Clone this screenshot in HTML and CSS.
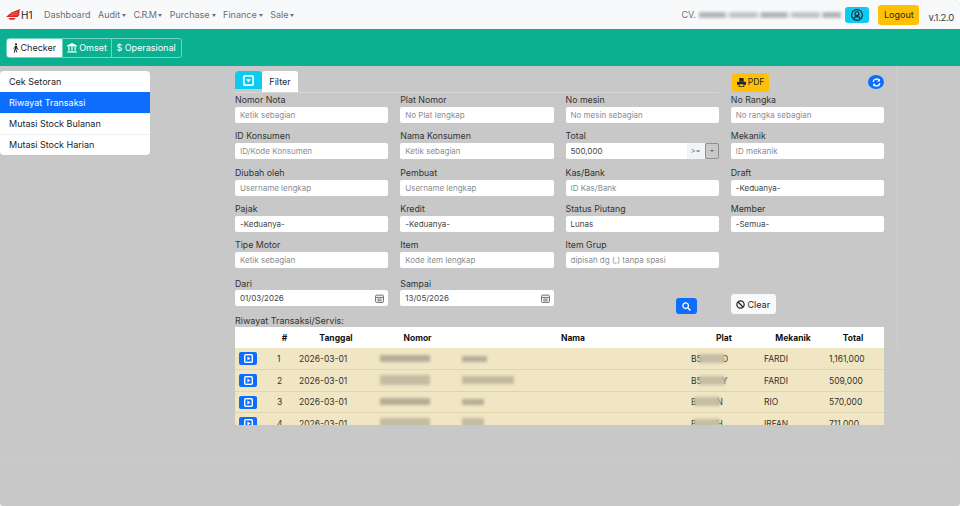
FILE: index.html
```html
<!DOCTYPE html>
<html lang="id">
<head>
<meta charset="utf-8">
<title>H1</title>
<link rel="stylesheet" href="styles.css">
</head>
<body>
<nav class="navbar">
  <a class="brand">
    <svg class="wing" viewBox="0 0 16 12"><path d="M0 8.500 6 3.500 15.500 0 14 3 15.500 3 13.500 5.500 15 5.500 12.500 8.800H1Z" fill="#e2231a"/><path d="M5.500 5 13 3.400M4 6.900 12.500 6" stroke="#f8f9fa" stroke-width=".35"/><path d="M2.500 9.800H10.500L8.500 11.700H4Z" fill="#e2231a"/></svg>
    <span>H1</span>
  </a>
  <ul class="menu">
    <li>Dashboard</li>
    <li class="caret">Audit</li>
    <li class="caret crm">C.R.M</li>
    <li class="caret">Purchase</li>
    <li class="caret">Finance</li>
    <li class="caret">Sale</li>
  </ul>
  <div class="nav-right">
    <span class="company">CV. <i class="blur blur-company"></i></span>
    <button class="btn btn-cyan btn-user" aria-label="Akun">
      <svg viewBox="0 0 16 16" width="12" height="12" fill="none" stroke="#212529" stroke-width="1.500"><circle cx="8" cy="8" r="7.200"/><circle cx="8" cy="6.300" r="2.600"/><path d="M3.400 13c1-2 2.800-2.800 4.600-2.800s3.600.8 4.600 2.800"/></svg>
    </button>
    <button class="btn btn-yellow btn-logout">Logout</button>
    <span class="version">v.1.2.0</span>
  </div>
</nav>

<header class="subbar">
  <div class="seg">
    <button class="seg-btn seg-active">
      <svg viewBox="0 0 10 16" width="6" height="10" fill="#212529"><circle cx="5" cy="2" r="1.800"/><path d="M3.500 4.500h3l1 4 2 1.500-.6 1-2.400-1.500-.5-1.500-.5 2.500 2 5H6l-1.800-4.500L2.800 16H1.200l2-7.500V6L2 7.500V10H1V7Z"/></svg>
      Checker
    </button>
    <button class="seg-btn">
      <svg viewBox="0 0 16 16" width="10" height="10" fill="#fff"><path d="M8 0 16 4V5.500H0V4ZM2 6.500H4V12H2ZM7 6.500H9V12H7ZM12 6.500H14V12H12ZM1 13H15V14.500H1ZM0 15H16V16H0Z"/></svg>
      Omset
    </button>
    <button class="seg-btn">$ Operasional</button>
  </div>
</header>

<main class="layout">
  <aside class="side">
    <a class="side-item">Cek Setoran</a>
    <a class="side-item side-active">Riwayat Transaksi</a>
    <a class="side-item">Mutasi Stock Bulanan</a>
    <a class="side-item">Mutasi Stock Harian</a>
  </aside>

  <section class="content">
    <div class="tools">
      <div class="tabs">
        <button class="tab-toggle" aria-label="Tutup filter">
          <svg viewBox="0 0 16 16" width="11" height="11"><rect width="16" height="16" rx="3" fill="#fff"/><rect x="2.500" y="2.500" width="11" height="11" fill="#0dcaf0"/><path d="M4.500 6h7L8 10.500Z" fill="#fff"/></svg>
        </button>
        <span class="tab">Filter</span>
      </div>
      <div class="tool-right">
        <button class="btn btn-yellow btn-pdf">
          <svg viewBox="0 0 16 16" width="9" height="9" fill="#212529"><path d="M4 0h6.500L12 1.500V6H4ZM1.500 6.500h13A1.500 1.500 0 0 1 16 8v4h-3v4H3v-4H0V8a1.500 1.500 0 0 1 1.500-1.500ZM4.500 11v3.500h7V11Z"/></svg>
          PDF
        </button>
        <button class="refresh" aria-label="Muat ulang">
          <svg viewBox="0 0 16 16" width="9" height="9" fill="none" stroke="#fff" stroke-width="2.400"><path d="M2 7A6 6 0 0 1 13 4.500"/><path d="M14 9A6 6 0 0 1 3 11.500"/><path d="M14 1v5H9Z" fill="#fff" stroke="none"/><path d="M2 15v-5h5Z" fill="#fff" stroke="none"/></svg>
        </button>
      </div>
    </div>

    <form class="filters">
      <label class="field">Nomor Nota<span class="input ph">Ketik sebagian</span></label>
      <label class="field">Plat Nomor<span class="input ph">No Plat lengkap</span></label>
      <label class="field">No mesin<span class="input ph">No mesin sebagian</span></label>
      <label class="field">No Rangka<span class="input ph">No rangka sebagian</span></label>

      <label class="field">ID Konsumen<span class="input ph">ID/Kode Konsumen</span></label>
      <label class="field">Nama Konsumen<span class="input ph">Ketik sebagian</span></label>
      <label class="field">Total
        <span class="group"><span class="input grow">500,000</span><span class="addon">&gt;=</span><span class="drop"></span></span>
      </label>
      <label class="field">Mekanik<span class="input ph">ID mekanik</span></label>

      <label class="field">Diubah oleh<span class="input ph">Username lengkap</span></label>
      <label class="field">Pembuat<span class="input ph">Username lengkap</span></label>
      <label class="field">Kas/Bank<span class="input ph">ID Kas/Bank</span></label>
      <label class="field">Draft<span class="input">-Keduanya-</span></label>

      <label class="field">Pajak<span class="input">-Keduanya-</span></label>
      <label class="field">Kredit<span class="input">-Keduanya-</span></label>
      <label class="field">Status Piutang<span class="input">Lunas</span></label>
      <label class="field">Member<span class="input">-Semua-</span></label>

      <label class="field">Tipe Motor<span class="input ph">Ketik sebagian</span></label>
      <label class="field">Item<span class="input ph">Kode item lengkap</span></label>
      <label class="field">Item Grup<span class="input ph">dipisah dg (,) tanpa spasi</span></label>
      <span></span>

      <label class="field field-date">Dari<span class="input date">01/03/2026<svg class="cal" viewBox="0 0 16 16" width="9" height="9" fill="none" stroke="#555" stroke-width="1.500"><rect x="1" y="2" width="14" height="13" rx="2"/><path d="M1 6h14M4 9h8M4 12h8"/></svg></span></label>
      <label class="field field-date">Sampai<span class="input date">13/05/2026<svg class="cal" viewBox="0 0 16 16" width="9" height="9" fill="none" stroke="#555" stroke-width="1.500"><rect x="1" y="2" width="14" height="13" rx="2"/><path d="M1 6h14M4 9h8M4 12h8"/></svg></span></label>
      <div class="search-cell">
        <button type="button" class="btn-search" aria-label="Cari">
          <svg viewBox="0 0 16 16" width="9" height="9" fill="none" stroke="#fff" stroke-width="2.400"><circle cx="6.500" cy="6.500" r="5"/><path d="M10.500 10.500 15 15"/></svg>
        </button>
      </div>
      <div class="clear-cell">
        <button type="button" class="btn-clear">
          <svg viewBox="0 0 16 16" width="9" height="9" fill="none" stroke="#212529" stroke-width="2.200"><circle cx="8" cy="8" r="6.500"/><path d="M3.500 3.500 12.500 12.500"/></svg>
          Clear
        </button>
      </div>
    </form>

    <p class="caption">Riwayat Transaksi/Servis:</p>
    <div class="table-wrap">
      <table class="trx">
        <colgroup>
          <col class="c0"><col class="c1"><col class="c2"><col class="c3"><col class="c4"><col class="c5"><col class="c6"><col class="c7">
        </colgroup>
        <thead>
          <tr><th></th><th>#</th><th>Tanggal</th><th>Nomor</th><th>Nama</th><th>Plat</th><th>Mekanik</th><th>Total</th></tr>
        </thead>
        <tbody>
          <tr>
            <td class="play-cell"><button class="play" aria-label="Buka"><svg viewBox="0 0 16 16" width="9" height="9"><rect width="16" height="16" rx="3" fill="#fff"/><rect x="2.500" y="2.500" width="11" height="11" fill="#0d6efd"/><path d="M6 4.500 11.500 8 6 11.500Z" fill="#fff"/></svg></button></td>
            <td>1</td><td>2026-03-01</td>
            <td><i class="blur b-no"></i></td><td><i class="blur b-n1"></i></td>
            <td class="plat">B5<i class="blur b-pl"></i>O</td><td>FARDI</td><td>1,161,000</td>
          </tr>
          <tr>
            <td class="play-cell"><button class="play" aria-label="Buka"><svg viewBox="0 0 16 16" width="9" height="9"><rect width="16" height="16" rx="3" fill="#fff"/><rect x="2.500" y="2.500" width="11" height="11" fill="#0d6efd"/><path d="M6 4.500 11.500 8 6 11.500Z" fill="#fff"/></svg></button></td>
            <td>2</td><td>2026-03-01</td>
            <td><i class="blur b-no b-tall"></i></td><td><i class="blur b-n2"></i></td>
            <td class="plat">B5<i class="blur b-pl"></i>Y</td><td>FARDI</td><td>509,000</td>
          </tr>
          <tr>
            <td class="play-cell"><button class="play" aria-label="Buka"><svg viewBox="0 0 16 16" width="9" height="9"><rect width="16" height="16" rx="3" fill="#fff"/><rect x="2.500" y="2.500" width="11" height="11" fill="#0d6efd"/><path d="M6 4.500 11.500 8 6 11.500Z" fill="#fff"/></svg></button></td>
            <td>3</td><td>2026-03-01</td>
            <td><i class="blur b-no"></i></td><td><i class="blur b-n3"></i></td>
            <td class="plat">B<i class="blur b-pl"></i>N</td><td>RIO</td><td>570,000</td>
          </tr>
          <tr>
            <td class="play-cell"><button class="play" aria-label="Buka"><svg viewBox="0 0 16 16" width="9" height="9"><rect width="16" height="16" rx="3" fill="#fff"/><rect x="2.500" y="2.500" width="11" height="11" fill="#0d6efd"/><path d="M6 4.500 11.500 8 6 11.500Z" fill="#fff"/></svg></button></td>
            <td>4</td><td>2026-03-01</td>
            <td><i class="blur b-no b-tall"></i></td><td><i class="blur b-n3 b-tall"></i></td>
            <td class="plat">B<i class="blur b-pl"></i>H</td><td>IRFAN</td><td>711,000</td>
          </tr>
        </tbody>
      </table>
    </div>
  </section>
</main>
</body>
</html>
```

FILE: styles.css
```css
* { box-sizing: border-box; }
html { height: 100%; background: #fff; }
body {
  position: relative;
  height: 100%;
  margin: 0;
  background: #c8c8c8;
  color: #212529;
  font-family: "Inter", "Open Sans", "Liberation Sans", sans-serif;
  font-size: 9px;
  overflow: hidden;
  border-radius: 0 6px 3px 3px;
}
/* faint edges of the dimmed panel behind the page */
body::before {
  content: "";
  position: absolute;
  left: 896px;
  top: 66px;
  width: 2px;
  height: 282px;
  background: #cccccc;
}
body::after {
  content: "";
  position: absolute;
  left: 0;
  top: 459px;
  width: 953px;
  height: 1px;
  background: #cccccc;
}
button { font: inherit; color: inherit; border: 0; padding: 0; cursor: pointer; }
i { font-style: normal; }

.navbar {
  height: 29px;
  background: #f8f9fa;
  display: flex;
  align-items: center;
  padding: 0 6px;
}
.brand { display: flex; align-items: center; width: 38px; font-size: 10px; color: #222; }
.wing { width: 15px; height: 11px; }
.menu { display: flex; gap: 7.500px; list-style: none; margin: 0; padding: 0; color: #6c6f73; font-size: 9px; }
.caret::after {
  content: "";
  display: inline-block;
  margin-left: 2px;
  vertical-align: 1.500px;
  border-top: 3px solid currentColor;
  border-left: 2.500px solid transparent;
  border-right: 2.500px solid transparent;
}
.crm { letter-spacing: -.6px; }
.nav-right { margin-left: auto; display: flex; align-items: center; }
.company { display: flex; align-items: center; gap: 3px; color: #6c6f73; width: 164px; }
.blur { display: inline-block; filter: blur(1.500px); }
.blur-company {
  width: 142px;
  height: 6px;
  background: repeating-linear-gradient(90deg, #b3b6b8 0 26px, #dfe1e3 26px 31px, #c2c5c7 31px 58px, #e3e5e6 58px 62px);
}
.btn { border-radius: 3px; }
.btn-cyan { background: #0dcaf0; }
.btn-yellow { background: #ffc107; }
.btn-user { width: 24px; height: 16px; display: flex; align-items: center; justify-content: center; margin-right: 9px; }
.btn-logout { width: 41px; height: 20px; font-size: 9px; margin-right: 9px; }
.version { font-size: 9.500px; letter-spacing: -.3px; color: #3a3d40; margin-top: 6px; }

.subbar {
  height: 37px;
  background: #0bb091;
  display: flex;
  align-items: center;
  padding: 0 6px;
}
.seg { display: flex; height: 20px; border: 1px solid #6fd3c0; border-radius: 3px; }
.seg-btn {
  display: flex;
  align-items: center;
  gap: 2px;
  background: transparent;
  color: #fff;
  padding: 0 4.500px;
  border-left: 1px solid #6fd3c0;
  font-size: 9px;
}
.seg-btn:first-child { border-left: 0; padding: 0 5.500px; }
.seg-btn:last-child { padding: 0 5px 0 4px; }
.seg-active { background: #fff; color: #212529; border-radius: 2px 0 0 2px; }

.layout { display: flex; padding-top: 5px; }
.side {
  width: 150px;
  height: 84px;
  background: #fff;
  border-radius: 4px;
  overflow: hidden;
  flex: none;
}
.side-item { display: flex; align-items: center; height: 21px; padding-left: 9px; box-shadow: inset 0 1px 0 #eef0f2; }
.side-item:first-child { box-shadow: none; }
.side-active { background: #0d6efd; color: #fff; box-shadow: none; }

.content { width: 649px; margin-left: 85px; }
.tools { display: grid; grid-template-columns: 1fr 153px; column-gap: 12px; height: 22px; }
.tabs { display: flex; align-items: flex-end; border-bottom: 1px solid #d6d6d6; }
.tab-toggle {
  width: 27px;
  height: 18px;
  margin-bottom: 3px;
  background: #0dcaf0;
  border-radius: 4px 4px 0 0;
  display: flex;
  align-items: center;
  justify-content: center;
}
.tab {
  width: 36px;
  height: 21px;
  background: #fff;
  border-radius: 3px 3px 0 0;
  display: flex;
  align-items: center;
  justify-content: center;
}
.tool-right { display: flex; justify-content: space-between; align-items: center; }
.btn-pdf { width: 37px; height: 19px; display: flex; align-items: center; justify-content: center; gap: 2px; font-size: 8.500px; margin-left: 1px; }
.refresh { width: 16px; height: 14px; border-radius: 50%; background: #0d6efd; display: flex; align-items: center; justify-content: center; }

.filters {
  display: grid;
  grid-template-columns: repeat(4, 1fr);
  column-gap: 12px;
  grid-template-rows: repeat(5, 36.250px) 40px;
  padding-top: 1px;
}
.field { display: flex; flex-direction: column; color: #333; line-height: 12px; font-size: 8.800px; }
.input {
  display: flex;
  align-items: center;
  height: 16px;
  margin-top: 1px;
  background: #fff;
  border-radius: 2px;
  padding-left: 5px;
  font-size: 8px;
  color: #444;
}
.ph { color: #8a8d90; }
.group { display: flex; margin-top: 1px; height: 16px; }
.group .input { margin-top: 0; }
.grow { flex: 1; border-radius: 2px 0 0 2px; }
.addon {
  width: 18px;
  background: #f1f3f4;
  display: flex;
  align-items: center;
  justify-content: center;
  font-size: 7px;
  color: #555;
}
.drop {
  width: 14px;
  background: #c9c9c9;
  border: 1px solid #8f8f8f;
  border-radius: 2px;
  display: flex;
  align-items: center;
  justify-content: center;
}
.drop::after { content: ""; border-top: 2px solid #666; border-left: 2px solid transparent; border-right: 2px solid transparent; }
.field-date { padding-top: 3px; }
.field-date .input { margin-top: 0; }
.date { justify-content: space-between; padding-right: 4px; }
.search-cell { display: flex; justify-content: flex-end; align-items: flex-end; padding: 0 22px 1px 0; }
.clear-cell { display: flex; align-items: flex-end; padding-bottom: 1px; }
.btn-search { width: 21px; height: 16px; background: #0d6efd; border-radius: 3px; display: flex; align-items: center; justify-content: center; }
.btn-clear { width: 45px; height: 20px; background: #f8f9fa; border-radius: 3px; display: flex; align-items: center; justify-content: center; gap: 2px; }

.caption { margin: 0; height: 12px; line-height: 11px; color: #333; }
.table-wrap { height: 98px; overflow: hidden; }
.trx { width: 649px; table-layout: fixed; border-collapse: collapse; font-size: 8.500px; }
.c0 { width: 42px; } .c1 { width: 22px; } .c2 { width: 81px; } .c3 { width: 82px; }
.c4 { width: 229px; } .c5 { width: 73px; } .c6 { width: 65px; } .c7 { width: 55px; }
.trx th { height: 21px; background: #fff; font-weight: 700; color: #111; padding: 0 7px 0 0; text-align: center; }
.trx td { height: 21.500px; background: #f0e6c3; border-bottom: 1px solid #e0d5ae; padding: 0; color: #333; white-space: nowrap; }
.play-cell { padding-left: 4px !important; }
.play { width: 18px; height: 13px; background: #0d6efd; border-radius: 2px; display: flex; align-items: center; justify-content: center; }
.b-no { width: 50px; height: 7px; background: #b5ad97; }
.b-n1 { width: 25px; height: 6px; background: #b5ad97; }
.b-n2 { width: 52px; height: 8px; background: #c2b99d; }
.b-n3 { width: 22px; height: 6px; background: #b5ad97; }
.b-tall { height: 10px; background: #c4bca3; }
.b-pl { width: 26px; height: 9px; background: #c6bda3; margin: 0 -3px; vertical-align: -1px; }
```
